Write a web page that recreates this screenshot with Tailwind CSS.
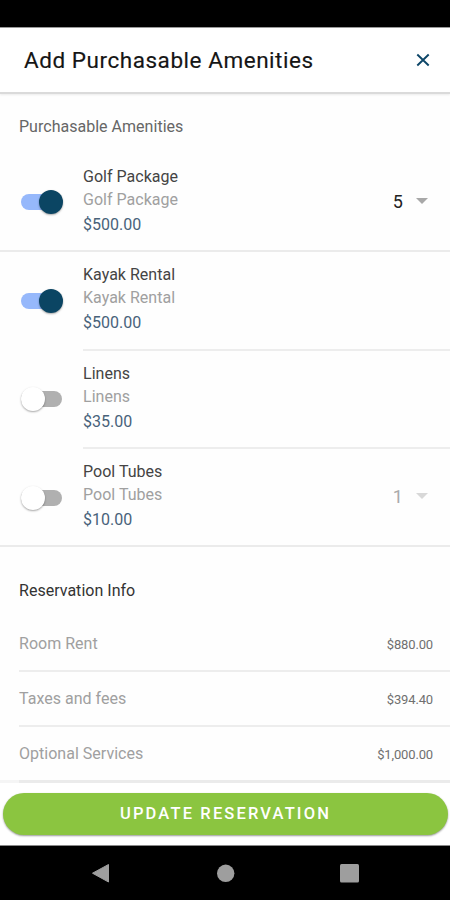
<!DOCTYPE html>
<html lang="en">
<head>
<meta charset="utf-8">
<title>Add Purchasable Amenities</title>
<script src="https://cdn.jsdelivr.net/npm/@tailwindcss/browser@4"></script>
</head>
<body class="bg-[#fefefe]">
<div class="flex h-[900px] w-[450px] flex-col overflow-hidden bg-[#fefefe] font-['Roboto',sans-serif] text-[16px] tracking-[0.02px] text-[#444]">
  <div class="h-[27px] shrink-0 bg-black"></div>
  <header class="z-10 flex h-[65px] shrink-0 items-center justify-between border-t border-[#999] bg-white pl-6 pr-5 shadow-[0_2px_0_#dadada,0_3px_2px_rgba(0,0,0,0.08)]">
    <h1 class="text-[22.5px] font-normal leading-8 tracking-[0.54px] text-[#151515] [-webkit-text-stroke:0.15px_#151515]">Add Purchasable Amenities</h1>
    <svg class="h-[14px] w-[14px]" viewBox="0 0 14 14" fill="none" stroke="#0d4668" stroke-width="1.9"><path d="M1.3 1.5L12.7 12.5M12.7 1.5L1.3 12.5"/></svg>
  </header>
  <main class="min-h-0 flex-1 overflow-hidden">
    <h2 class="h-[60px] pl-[19px] pt-[23px] leading-6 text-[#666]">Purchasable Amenities</h2>
    <ul>
      <li class="flex h-[100px] items-center border-b-2 border-[#ebebeb] pl-[21px] pr-[22px]">
        <span class="relative mt-px h-4 w-[41px] rounded-full bg-[#96b8fb]"><i class="absolute -right-px -top-[4px] h-6 w-6 rounded-full bg-[#0b4563] shadow-[0_1px_2px_rgba(0,0,0,0.35)]"></i></span>
        <div class="ml-[21px] h-full flex-1 pt-[13px]"><p class="h-[23px] leading-[23px]">Golf Package</p><p class="h-[25px] leading-[23px] text-[#a0a0a0]">Golf Package</p><p class="h-6 leading-6 text-[#48627a]">$500.00</p></div>
        <span class="mr-[13px] mt-px text-[18px] leading-6 text-[#222]">5</span>
        <svg class="h-[6px] w-[12px]" viewBox="0 0 12 6" fill="#a8a8a8"><path d="M0 0H12L6 6Z"/></svg>
      </li>
      <li class="flex h-[99px] items-center pl-[21px]">
        <span class="relative mb-[2px] h-4 w-[41px] rounded-full bg-[#96b8fb]"><i class="absolute -right-px -top-[4px] h-6 w-6 rounded-full bg-[#0b4563] shadow-[0_1px_2px_rgba(0,0,0,0.35)]"></i></span>
        <div class="ml-[21px] h-full flex-1 border-b-2 border-[#ededed] pt-[11px]"><p class="h-[23px] leading-[23px]">Kayak Rental</p><p class="h-[25px] leading-[23px] text-[#a0a0a0]">Kayak Rental</p><p class="h-6 leading-6 text-[#48627a]">$500.00</p></div>
      </li>
      <li class="flex h-[98px] items-center pl-[21px]">
        <span class="relative mb-[2px] h-4 w-[41px] rounded-full bg-[#b0b0b0]"><i class="absolute left-0 -top-[4px] h-6 w-6 rounded-full bg-white shadow-[0_1px_2px_rgba(0,0,0,0.35)]"></i></span>
        <div class="ml-[21px] h-full flex-1 border-b-2 border-[#ededed] pt-[11px]"><p class="h-[23px] leading-[23px]">Linens</p><p class="h-[25px] leading-[23px] text-[#a0a0a0]">Linens</p><p class="h-6 leading-6 text-[#48627a]">$35.00</p></div>
      </li>
      <li class="flex h-[98px] items-center border-b-2 border-[#ebebeb] pl-[21px] pr-[22px]">
        <span class="relative mt-[2px] h-4 w-[41px] rounded-full bg-[#b0b0b0]"><i class="absolute left-0 -top-[4px] h-6 w-6 rounded-full bg-white shadow-[0_1px_2px_rgba(0,0,0,0.35)]"></i></span>
        <div class="ml-[21px] h-full flex-1 pt-[11px]"><p class="h-[23px] leading-[23px]">Pool Tubes</p><p class="h-[25px] leading-[23px] text-[#a0a0a0]">Pool Tubes</p><p class="h-6 leading-6 text-[#48627a]">$10.00</p></div>
        <span class="mr-[13px] text-[18px] leading-6 text-[#aaa]">1</span>
        <svg class="mb-[2px] h-[6px] w-[12px]" viewBox="0 0 12 6" fill="#d8d8d8"><path d="M0 0H12L6 6Z"/></svg>
      </li>
    </ul>
    <h2 class="h-[70px] pl-[19px] pt-[32px] leading-6 text-[#333]">Reservation Info</h2>
    <dl class="pl-[19px] text-[#a0a0a0]">
      <div class="flex h-[55px] items-center justify-between border-b-2 border-[#ededed] pr-[17px]"><dt>Room Rent</dt><dd class="pt-[3px] text-[13px] tracking-[-0.15px] text-[#707070]">$880.00</dd></div>
      <div class="flex h-[55px] items-center justify-between border-b-2 border-[#ededed] pr-[17px]"><dt>Taxes and fees</dt><dd class="pt-[3px] text-[13px] tracking-[-0.15px] text-[#707070]">$394.40</dd></div>
      <div class="flex h-[53px] items-center justify-between pr-[17px]"><dt>Optional Services</dt><dd class="pt-[3px] text-[13px] tracking-[-0.15px] text-[#707070]">$1,000.00</dd></div>
    </dl>
  </main>
  <footer class="flex h-[66px] shrink-0 flex-col border-b border-b-[#888] bg-white">
    <div class="flex h-[3px] shrink-0 bg-[#f5f5f5] pl-[19px]"><div class="flex-1 bg-[#ebebeb]"></div></div>
    <button class="ml-[3px] mr-[2px] mt-[10px] h-[42px] shrink-0 rounded-full bg-[#8bc540] pb-px text-[16.5px] font-medium leading-5 tracking-[2.15px] text-white shadow-[0_1px_2px_rgba(0,0,0,0.4)]">UPDATE RESERVATION</button>
  </footer>
  <nav class="h-[54px] shrink-0 bg-black">
    <svg class="h-[54px] w-[450px]" viewBox="0 846 450 54" fill="#9e9e9e"><path stroke="#9e9e9e" stroke-width="1" stroke-linejoin="round" d="M92.5 873.2L108.5 864.5V882Z"/><circle cx="225.700" cy="873.300" r="8.700"/><rect x="340" y="864" width="19" height="18.500" rx="1.500"/></svg>
  </nav>
</div>
</body>
</html>
